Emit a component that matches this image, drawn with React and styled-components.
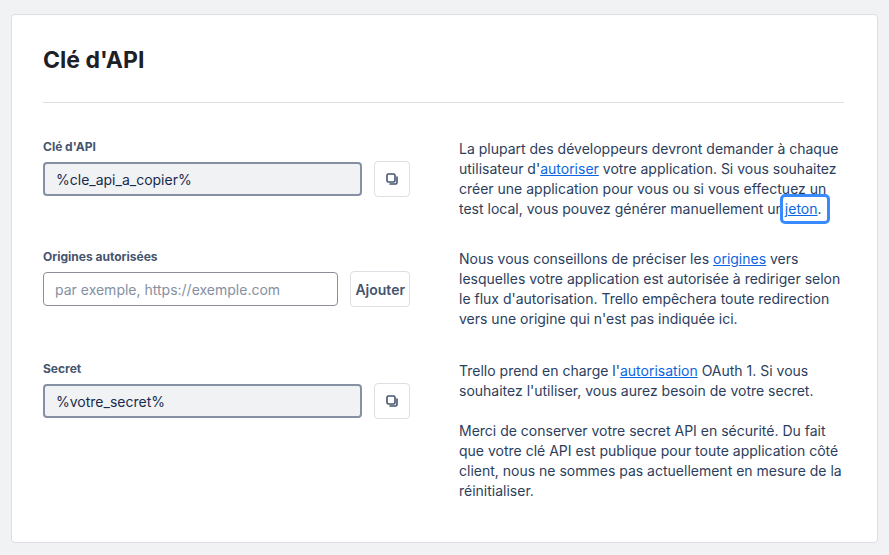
import React from "react";
import styled, { createGlobalStyle } from "styled-components";

const Global = createGlobalStyle`
  html, body { margin: 0; padding: 0; background: #f1f2f4; }
  body { font-family: Inter, "Noto Sans", sans-serif; color: #172b4d; }
  * { box-sizing: border-box; }
`;

const Page = styled.div`
  padding: 14px 11px 12px 11px;
`;

const Card = styled.div`
  background: #fff;
  border: 1px solid #dcdfe4;
  border-radius: 4px;
  padding: 30px 33px 28px 31px;
  min-height: 529px;
`;

const Title = styled.h1`
  margin: 0;
  font-size: 23px;
  font-weight: 700;
  line-height: 30px;
  color: #1d2125;
  padding-bottom: 27px;
  border-bottom: 1px solid #dcdfe4;
`;

const Grid = styled.div`
  display: grid;
  grid-template-columns: 367px 1fr;
  column-gap: 49px;
  margin-top: 36px;
`;

const Row = styled.div`
  display: contents;
`;

const Left = styled.div`
  margin-bottom: ${p => p.$mb}px;
`;

const Label = styled.div`
  font-size: 12px;
  font-weight: 700;
  line-height: 16px;
  margin-bottom: 6px;
  color: #44546f;
`;

const Field = styled.div`
  display: flex;
  align-items: center;
  gap: 12px;
`;

const Input = styled.div`
  flex: 1;
  height: 34px;
  display: flex;
  align-items: center;
  padding: 0 11px;
  font-size: 14px;
  border-radius: 4px;
  background: ${p => (p.$readonly ? "#f1f2f4" : "#fff")};
  border: ${p => (p.$readonly ? "2px solid #8590a2" : "1px solid #8c8f97")};
  color: ${p => (p.$placeholder ? "#8590a2" : "#172b4d")};
`;

const Btn = styled.button`
  height: 36px;
  min-width: 36px;
  padding: 0 ${p => (p.$text ? "4px" : "0")};
  background: #fff;
  border: 1px solid #dcdfe4;
  border-radius: 4px;
  font-family: inherit;
  font-size: 14px;
  font-weight: 600;
  color: #44546f;
  display: flex;
  align-items: center;
  justify-content: center;
`;

const Text = styled.div`
  font-size: 14px;
  line-height: 20px;
  color: #2c3e5d;
  margin-bottom: ${p => p.$mb}px;
  p { margin: 0 0 20px 0; }
  p:last-child { margin-bottom: 0; }
`;

const A = styled.a`
  color: #0c66e4;
  text-decoration: underline;
`;

const Focus = styled.span`
  outline: 3px solid #388bff;
  outline-offset: 1px;
  border-radius: 1px;
  padding: 2px 4px 3px 1px;
`;

const CopyIcon = () => (
  <svg width="16" height="16" viewBox="0 0 16 16" fill="none" stroke="#44546f" strokeWidth="1.6">
    <rect x="3" y="3" width="8" height="8" rx="1.5" />
    <path d="M13 6v5.5A1.5 1.5 0 0 1 11.5 13H6" strokeLinecap="round" />
  </svg>
);

export default function App() {
  return (
    <>
      <Global />
      <Page>
        <Card>
          <Title>Clé d'API</Title>
          <Grid>
            <Row>
              <Left $mb={30}>
                <Label>Clé d'API</Label>
                <Field>
                  <Input $readonly>%cle_api_a_copier%</Input>
                  <Btn><CopyIcon /></Btn>
                </Field>
              </Left>
              <Text $mb={30}>
                La plupart des développeurs devront demander à chaque utilisateur d'<A href="#">autoriser</A> votre application. Si vous souhaitez créer une application pour vous ou si vous effectuez un test local, vous pouvez générer manuellement un<Focus><A href="#">jeton</A>.</Focus>
              </Text>
            </Row>
            <Row>
              <Left $mb={32}>
                <Label>Origines autorisées</Label>
                <Field>
                  <Input $placeholder>par exemple, https://exemple.com</Input>
                  <Btn $text>Ajouter</Btn>
                </Field>
              </Left>
              <Text $mb={32}>
                Nous vous conseillons de préciser les <A href="#">origines</A> vers lesquelles votre application est autorisée à rediriger selon le flux d'autorisation. Trello empêchera toute redirection vers une origine qui n'est pas indiquée ici.
              </Text>
            </Row>
            <Row>
              <Left $mb={0}>
                <Label>Secret</Label>
                <Field>
                  <Input $readonly>%votre_secret%</Input>
                  <Btn><CopyIcon /></Btn>
                </Field>
              </Left>
              <Text $mb={0}>
                <p>Trello prend en charge l'<A href="#">autorisation</A> OAuth 1. Si vous souhaitez l'utiliser, vous aurez besoin de votre secret.</p>
                <p>Merci de conserver votre secret API en sécurité. Du fait que votre clé API est publique pour toute application côté client, nous ne sommes pas actuellement en mesure de la réinitialiser.</p>
              </Text>
            </Row>
          </Grid>
        </Card>
      </Page>
    </>
  );
}
